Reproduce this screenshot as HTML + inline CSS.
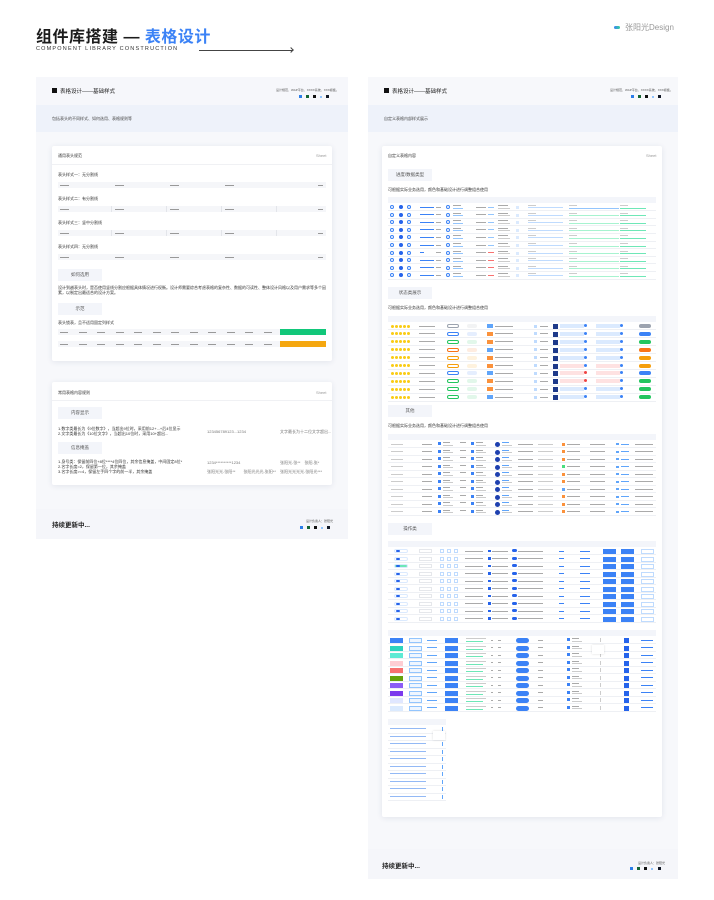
<!DOCTYPE html>
<html><head><meta charset="utf-8"><style>
*{margin:0;padding:0;box-sizing:border-box}
body{width:714px;height:900px;background:#fff;position:relative;overflow:hidden;font-family:"Liberation Sans","Noto Sans CJK SC",sans-serif;color:#222}
.a{position:absolute}
.t{font-size:4px;color:#333;white-space:nowrap}
.btn{position:absolute;background:#f3f5fa;font-size:4.5px;color:#555;display:flex;align-items:center;justify-content:center}
.card{position:absolute;background:#fff;box-shadow:0 1px 6px rgba(40,60,110,.10);border-radius:2px}
</style></head><body>
<div class="a" style="left:36px;top:23px;font-size:16px;font-weight:bold;color:#1c1c1c;letter-spacing:0.5px">组件库搭建 — <span style="color:#3b82f6">表格设计</span></div>
<div class="a" style="left:36px;top:46px;font-size:5.5px;letter-spacing:1.2px;color:#333">COMPONENT LIBRARY CONSTRUCTION</div>
<div class="a" style="left:199px;top:50px;width:94px;height:1px;background:#444"></div>
<div class="a" style="left:289px;top:48px;width:4px;height:4px;border-top:1px solid #444;border-right:1px solid #444;transform:rotate(45deg)"></div>
<div class="a" style="left:614px;top:26px;width:6px;height:3px;border-radius:2px;background:linear-gradient(90deg,#3b82f6,#34d399)"></div>
<div class="a" style="left:625px;top:22px;font-size:8px;color:#999">张阳光Design</div>

<div class="a" style="left:36px;top:77px;width:312px;height:462px;background:#f7f8fb"></div>
<div class="a" style="left:36px;top:77px;width:312px;height:28px;background:#f6f7fb"></div>
<div class="a" style="left:36px;top:105px;width:312px;height:27px;background:#eef2fa"></div>
<div class="a" style="left:52px;top:88px;width:5px;height:5px;background:#111"></div>
<div class="a" style="left:60px;top:87px;font-size:5.5px;color:#222">表格设计——基础样式</div>
<div class="a" style="left:52px;top:116px;font-size:4px;color:#444">包括表头的不同样式、如何选用、表格规则等</div>
<div class="a" style="left:276px;top:88px;font-size:3px;color:#555">设计规范、WAP平台、XXXX系统、XXX模板。</div>
<div class="a" style="left:299px;top:95px;width:3px;height:3px;background:#2b7de9"></div>
<div class="a" style="left:306px;top:95px;width:3px;height:3px;background:#166534"></div>
<div class="a" style="left:313px;top:95px;width:3px;height:3px;background:#111"></div>
<div class="a" style="left:320px;top:96px;width:2px;height:2px;background:#93c5fd"></div>
<div class="a" style="left:326px;top:95px;width:3px;height:3px;background:#111827"></div>

<div class="card" style="left:52px;top:146px;width:280px;height:215px"></div>
<div class="a t" style="left:58px;top:153px">通用表头规范</div>
<div class="a t" style="left:316px;top:153px;color:#999">Sheet</div>
<div class="a" style="left:52px;top:164px;width:280px;height:1px;background:#f0f1f4"></div>
<div id="L"></div>

<div class="card" style="left:52px;top:382px;width:280px;height:103px"></div>
<div class="a t" style="left:58px;top:390px">常用表格内容规则</div>
<div class="a t" style="left:316px;top:390px;color:#999">Sheet</div>
<div class="a" style="left:52px;top:400px;width:280px;height:1px;background:#f0f1f4"></div>
<div class="btn" style="left:58px;top:407px;width:44px;height:12px">内容显示</div>
<div class="a t" style="left:58px;top:426px;line-height:5px">1.数字类最长为《9位数字》，当超出9位时，采用前12+...+后4位显示<br>2.文字类最长为《10位文字》，当超出10位时，采用10+超出...</div>
<div class="a t" style="left:207px;top:429px;color:#777">123456789123...1234</div>
<div class="a t" style="left:280px;top:429px;color:#777">文字最长为十二位文字超出...</div>
<div class="btn" style="left:58px;top:442px;width:44px;height:12px">信息掩盖</div>
<div class="a t" style="left:58px;top:459px;line-height:5px">1.身号类：保留前四位+8位****4位四位，其余信息掩盖，中间固定8位*<br>2.名字长度=2，保留第一位，其余掩盖<br>3.名字长度&gt;=4，保留左手四个字的前一半，其余掩盖</div>
<div class="a t" style="left:207px;top:460px;color:#777">1234**********1234</div>
<div class="a t" style="left:280px;top:460px;color:#777">张阳光-张**　张阳-张*</div>
<div class="a t" style="left:207px;top:469px;color:#777">张阳光光-张阳**　　张阳光光光-张阳**</div>
<div class="a t" style="left:280px;top:469px;color:#777">张阳光光光光-张阳光***</div>

<div class="a" style="left:36px;top:509px;width:312px;height:30px;background:#f5f6fa"></div>
<div class="a" style="left:52px;top:519px;font-size:6.5px;font-weight:bold;color:#222">持续更新中...</div>
<div class="a" style="left:306px;top:519px;font-size:3px;color:#555">设计负责人：张阳光</div>
<div class="a" style="left:300px;top:526px;width:3px;height:3px;background:#2b7de9"></div>
<div class="a" style="left:307px;top:526px;width:3px;height:3px;background:#166534"></div>
<div class="a" style="left:314px;top:526px;width:3px;height:3px;background:#111"></div>
<div class="a" style="left:321px;top:527px;width:2px;height:2px;background:#93c5fd"></div>
<div class="a" style="left:327px;top:526px;width:3px;height:3px;background:#111827"></div>

<div class="a" style="left:368px;top:77px;width:310px;height:802px;background:#f7f8fb"></div>
<div class="a" style="left:368px;top:105px;width:310px;height:27px;background:#eef2fa"></div>
<div class="a" style="left:384px;top:88px;width:5px;height:5px;background:#111"></div>
<div class="a" style="left:392px;top:87px;font-size:5.5px;color:#222">表格设计——基础样式</div>
<div class="a" style="left:384px;top:116px;font-size:4px;color:#444">自定义表格内部样式展示</div>
<div class="a" style="left:610px;top:88px;font-size:3px;color:#555">设计规范、WAP平台、XXXX系统、XXX模板。</div>
<div class="a" style="left:631px;top:95px;width:3px;height:3px;background:#2b7de9"></div>
<div class="a" style="left:638px;top:95px;width:3px;height:3px;background:#166534"></div>
<div class="a" style="left:645px;top:95px;width:3px;height:3px;background:#111"></div>
<div class="a" style="left:652px;top:96px;width:2px;height:2px;background:#93c5fd"></div>
<div class="a" style="left:658px;top:95px;width:3px;height:3px;background:#111827"></div>

<div class="card" style="left:382px;top:146px;width:280px;height:671px"></div>
<div class="a t" style="left:388px;top:153px">自定义表格内容</div>
<div class="a t" style="left:646px;top:153px;color:#999">Sheet</div>
<div class="btn" style="left:388px;top:169px;width:44px;height:12px">进度/数据类型</div>
<div class="a t" style="left:388px;top:187px">可根据实际业务选用，颜色和基础设计进行调整组合使用</div>
<div class="btn" style="left:388px;top:287px;width:44px;height:12px">状态类展示</div>
<div class="a t" style="left:388px;top:305px">可根据实际业务选用，颜色和基础设计进行调整组合使用</div>
<div class="btn" style="left:388px;top:405px;width:44px;height:12px">其他</div>
<div class="a t" style="left:388px;top:423px">可根据实际业务选用，颜色和基础设计进行调整组合使用</div>
<div class="btn" style="left:388px;top:523px;width:44px;height:12px">操作类</div>
<div id="R"></div>

<div class="a" style="left:368px;top:849px;width:310px;height:30px;background:#f5f6fa"></div>
<div class="a" style="left:382px;top:860px;font-size:6.5px;font-weight:bold;color:#222">持续更新中...</div>
<div class="a" style="left:638px;top:861px;font-size:3px;color:#555">设计负责人：张阳光</div>
<div class="a" style="left:630px;top:867px;width:3px;height:3px;background:#2b7de9"></div>
<div class="a" style="left:637px;top:867px;width:3px;height:3px;background:#166534"></div>
<div class="a" style="left:644px;top:867px;width:3px;height:3px;background:#111"></div>
<div class="a" style="left:651px;top:868px;width:2px;height:2px;background:#93c5fd"></div>
<div class="a" style="left:658px;top:867px;width:3px;height:3px;background:#111827"></div>

<script>
function d(p,x,y,w,h,bg,extra){var e=document.createElement('div');e.className='a';e.style.cssText='left:'+x+'px;top:'+y+'px;width:'+w+'px;height:'+h+'px;background:'+bg+';'+(extra||'');p.appendChild(e);return e;}
var L=document.getElementById('L'),R=document.getElementById('R');
var lab=['表头样式一：无分割线','表头样式二：有分割线','表头样式三：竖中分割线','表头样式四：无分割线'];
for(var i=0;i<4;i++){var y=172+i*24;var t=d(L,58,y,80,6,'transparent');t.className='a t';t.textContent=lab[i];
d(L,58,y+10,268,6,'#f5f6f9');for(var k=0;k<4;k++)d(L,60+k*55,y+12.5,9,1,'#999');d(L,318,y+12.5,5,1,'#999');
if(i==1||i==2)for(var k=1;k<5;k++)d(L,58+k*55-2,y+10,0.6,6,'#e3e5ea');}
var b=d(L,58,269,44,12,'#f3f5fa');b.className='btn';b.textContent='如何选用';
var p=d(L,58,285,268,10,'transparent','font-size:4px;line-height:5px;color:#333;white-space:normal');p.textContent='设计到越表头时，是否使用竖线分割应根据具体情况进行权衡。设计师需要综合考虑表格的复杂性、数据的可读性、整体设计风格以及用户需求等多个因素，以制定出最适合的设计方案。';
b=d(L,58,303,44,12,'#f3f5fa');b.className='btn';b.textContent='示范';
var t2=d(L,58,320,80,6,'transparent');t2.className='a t';t2.textContent='表头锁表，且不适用固定列样式';
for(var r=0;r<2;r++){var y=329+r*12;d(L,58,y,222,6,'#f5f6f9');for(var k=0;k<12;k++)d(L,60+k*18.5,y+2.5,8,1,'#999');
d(L,280,y,46,6,r?'#f5a70f':'#12c77a');}
function grid(x,y,w,rows,rh){d(R,x,y,w,6,'#f3f5fa');for(var r=0;r<rows;r++)d(R,x,y+6+(r+1)*rh-0.5,w,0.5,'#eef0f4');}
var G='#aaa',G2='#ccc';
grid(388,197,268,10,7.6);
for(var r=0;r<10;r++){var y=205+r*7.6;
 d(R,390,y,4,4,'transparent','border:0.6px solid #3b82f6;border-radius:50%');d(R,399,y,4,4,'#2563eb','border-radius:50%');d(R,407,y,4,4,'transparent','border:0.6px solid #3b82f6;border-radius:50%');
 d(R,420,y+1.5,(r==6?4:14),1.2,'#3b82f6');d(R,436,y+1.5,5,1,G);
 d(R,446,y,4,4,'transparent','border:0.6px solid #3b82f6;border-radius:50%');d(R,453,y,8,1,G);d(R,453,y+2.5,10,1,'#93c5fd');
 d(R,476,y+1.5,10,1,G);d(R,488,y+1.5,6,1,r>5?'#f87171':'#93c5fd');
 d(R,498,y,10,1,G);d(R,498,y+2.5,12,1,G2);d(R,516,y+1,3,3,'#dbeafe');
 d(R,528,y+2,35,1,'#bfdbfe');d(R,528,y,8,1,G2);
 d(R,569,y,8,1,G2);d(R,569,y+2.5,50,1.2,r==0?'#93c5fd':'#a7f3d0');
 d(R,620,y,8,1,G2);d(R,620,y+2.5,26,1.2,'#6ee7b7');}
grid(388,316,268,10,7.9);
var sc=['#9ca3af','#3b82f6','#22c55e','#f97316','#f59e0b','#f59e0b','#3b82f6','#22c55e','#22c55e','#22c55e'];
for(var r=0;r<10;r++){var y=324+r*7.9;
 for(var k=0;k<5;k++)d(R,391+k*4,y+0.5,3,3,'#facc15','border-radius:50%');
 d(R,419,y+1.5,16,1,G);
 d(R,447,y,12,4,'transparent','border:0.5px solid '+sc[r]+';border-radius:2px');d(R,467,y,10,4,sc[r]+'22','border-radius:2px');
 d(R,487,y,6,4,r%3?'#fb923c':'#60a5fa');d(R,495,y+1.5,18,1,G);
 d(R,534,y+0.5,3,3,'#bfdbfe');d(R,540,y+1.5,8,1,G);
 d(R,553,y,5,5,'#1e3a8a');d(R,560,y,24,4,r>4&&r<8?'#fee2e2':'#dbeafe');d(R,584,y,3,3,r>5&&r<8?'#ef4444':'#3b82f6','border-radius:50%');
 d(R,596,y,24,4,r>4&&r<8?'#fee2e2':'#dbeafe');d(R,620,y,3,3,'#3b82f6','border-radius:50%');
 d(R,639,y,12,4,sc[r],'border-radius:2px');}
grid(388,434,268,10,7.5);
var oc=['#fb923c','#fb923c','#fb923c','#4ade80','#fb923c','#fb923c','#60a5fa','#fb923c','#fb923c','#fb923c'];
for(var r=0;r<10;r++){var y=442+r*7.5;
 d(R,391,y+1.5,12,1,G2);d(R,422,y+1.5,10,1,G);d(R,438,y,3,3,'#3b82f6');d(R,443,y,7,1,G);d(R,443,y+2.5,10,0.8,G2);
 d(R,460,y,6,1,G);d(R,471,y,3,3,'#3b82f6');d(R,476,y,7,1,G);d(R,476,y+2.5,10,0.8,G2);
 d(R,495,y,5,5,'#1e40af','border-radius:50%');d(R,502,y,7,1,'#60a5fa');d(R,502,y+2.5,10,0.8,G2);
 d(R,518,y+1.5,15,1,G);d(R,538,y+1.5,15,1,G2);d(R,562,y+0.5,3,3,oc[r]);d(R,567,y+1.5,13,1,G);
 d(R,590,y+1.5,15,1,G);d(R,616,y+1,3,2,'#60a5fa');d(R,621,y+1.5,8,1,'#60a5fa');d(R,635,y+1.5,18,1,G);}
grid(388,541,268,10,7.5);
for(var r=0;r<10;r++){var y=549+r*7.5;
 d(R,394,y,14,4,r==2?'#6ee7b7':'#fff','border:0.5px solid #dbeafe;border-radius:2px');d(R,396,y+1,4,2,'#2563eb','border-radius:1px');
 d(R,419,y,13,4,'#fff','border:0.5px solid #e5e7eb');d(R,440,y,4,4,'#fff','border:0.5px solid #bfdbfe');d(R,447,y,4,4,'#fff','border:0.5px solid #bfdbfe');d(R,454,y,4,4,'#fff','border:0.5px solid #bfdbfe');
 d(R,465,y+1.5,18,1,G);d(R,488,y+0.5,2.5,2.5,'#2563eb');d(R,492,y+1.5,16,1,G);d(R,512,y,5,3,'#2563eb','border-radius:2px');d(R,518,y+1.5,25,1,G);
 d(R,559,y+1.5,5,1,'#3b82f6');d(R,580,y+1.5,10,1,'#3b82f6');d(R,603,y,13,5,'#3b82f6');d(R,621,y,13,5,'#3b82f6');d(R,641,y,13,5,'#fff','border:0.6px solid #bfdbfe');}
grid(388,630,268,10,7.5);
var cc=['#3b82f6','#2dd4bf','#5eead4','#fecdd3','#f87171','#65a30d','#8b5cf6','#7c3aed','#e0e7ff','#dbeafe'];
for(var r=0;r<10;r++){var y=638+r*7.5;
 d(R,390,y,13,5,cc[r]);d(R,409,y,13,5,'#eff6ff','border:0.6px solid #93c5fd');d(R,427,y+1.5,10,1,'#60a5fa');d(R,445,y,13,5,'#3b82f6');
 d(R,466,y,20,1,G2);d(R,466,y+3,17,1,'#6ee7b7');d(R,491,y+1.5,2,1,G);d(R,498,y+1.5,3,1,G);
 d(R,516,y,13,5,'#3b82f6','border-radius:3px');d(R,538,y+1.5,5,1,G);
 d(R,567,y,3,3,'#3b82f6');d(R,572,y,7,1,G);d(R,572,y+2.5,10,0.8,G2);d(R,600,y,1,4,G2);
 d(R,624,y,5,5,'#2563eb');d(R,641,y+1.5,12,1,'#3b82f6');}
d(R,592,645,12,9,'#fff','box-shadow:0 0 2px rgba(0,0,0,.15)');
d(R,388,719,58,6,'#f3f5fa');
for(var r=0;r<10;r++){var y=728+r*7.5;d(R,390,y,36,1.2,'#93b9f5');d(R,442,y-1,0.6,4,'#60a5fa');d(R,388,y+4.5,58,0.5,'#eef0f4');}
d(R,433,731,12,9,'#fff','box-shadow:0 0 2px rgba(0,0,0,.15)');
</script>
</body></html>
